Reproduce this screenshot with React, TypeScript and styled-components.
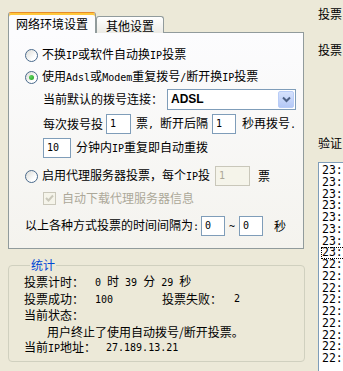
import React from 'react'
import styled, { createGlobalStyle } from 'styled-components'

const GlobalStyle = createGlobalStyle`
  html, body { margin: 0; padding: 0; }
  body {
    background: #ece9d8;
    font-family: "Noto Sans CJK SC", "Noto Sans", sans-serif;
    font-size: 12px;
    color: #000;
  }
`

const logLines = [
  '23:09:41', '23:08:17', '23:06:52', '23:05:30', '23:04:03', '23:02:39', '23:01:14', '23:00:02',
  '22:58:36', '22:57:11', '22:55:47', '22:54:20', '22:52:58', '22:51:33', '22:50:09', '22:48:44', '22:47:18'
]

// полуширинные символы как в SimSun
const A = styled.span`
  font-family: "DejaVu Sans Mono", "Liberation Mono", monospace;
  font-size: 10px;
`

const Screen = styled.div`
  width: 343px;
  height: 371px;
  overflow: hidden;
  display: flex;
  align-items: flex-start;
`

const LeftCol = styled.div`
  flex: none;
  width: 297px;
  margin-left: 8px;
  display: flex;
  flex-direction: column;
`

const TabStrip = styled.div`
  height: 21px;
  margin-top: 12px;
  margin-bottom: -1px;
  display: flex;
  align-items: flex-end;
  position: relative;
  z-index: 1;
`

const Tab = styled.div<{ $active?: boolean; $w: number }>`
  box-sizing: border-box;
  width: ${({ $w }) => $w}px;
  height: ${({ $active }) => ($active ? 21 : 17)}px;
  align-self: ${({ $active }) => ($active ? 'flex-end' : 'flex-start')};
  margin-top: ${({ $active }) => ($active ? 0 : 4)}px;
  border: 1px solid #919b9c;
  border-bottom: none;
  border-radius: 3px 3px 0 0;
  background: ${({ $active }) => ($active ? '#fcfcfe' : 'linear-gradient(#ffffff, #ecebe6)')};
  ${({ $active }) => ($active ? 'border-top: 1px solid #e68b2c; box-shadow: inset 0 2px 0 #ffc83c;' : '')}
  display: flex;
  justify-content: center;
  align-items: center;
  padding-top: ${({ $active }) => ($active ? 1 : 2)}px;
  line-height: 14px;
  font-size: 12px;
`

const Panel = styled.div`
  box-sizing: border-box;
  width: 296px;
  height: 217px;
  border: 1px solid #919b9c;
  background: linear-gradient(#fcfcfe, #f4f3ee);
  padding-left: 16px;
  display: flex;
  flex-direction: column;
`

const Row = styled.div<{ $mt: number; $indent?: number }>`
  height: 20px;
  margin-top: ${({ $mt }) => $mt}px;
  padding-left: ${({ $indent }) => $indent ?? 0}px;
  display: flex;
  align-items: center;
  white-space: nowrap;
  line-height: 14px;
`

const Label = styled.span<{ $ml?: number; $muted?: boolean }>`
  margin-left: ${({ $ml }) => $ml ?? 0}px;
  color: ${({ $muted }) => ($muted ? '#aca899' : '#000')};
`

const Radio = styled.span<{ $checked?: boolean }>`
  box-sizing: border-box;
  flex: none;
  width: 13px;
  height: 13px;
  margin-right: 4px;
  border-radius: 50%;
  border: 1px solid #4a6a8c;
  background: linear-gradient(135deg, #dcdcd7, #ffffff 70%);
  display: flex;
  align-items: center;
  justify-content: center;

  &::after {
    content: '';
    display: ${({ $checked }) => ($checked ? 'block' : 'none')};
    width: 5px;
    height: 5px;
    border-radius: 50%;
    background: radial-gradient(circle at 35% 35%, #5ed25e, #21a121);
  }
`

const Check = styled.span`
  box-sizing: border-box;
  flex: none;
  width: 13px;
  height: 13px;
  border: 1px solid #cac8bb;
  background: #f5f4ea;
  display: flex;
  align-items: center;
  justify-content: center;
`

const Field = styled.div<{ $w: number; $ml?: number; $disabled?: boolean }>`
  box-sizing: border-box;
  flex: none;
  width: ${({ $w }) => $w}px;
  height: 20px;
  margin-left: ${({ $ml }) => $ml ?? 0}px;
  border: 1px solid ${({ $disabled }) => ($disabled ? '#c9c7ba' : '#7f9db9')};
  background: ${({ $disabled }) => ($disabled ? '#f5f4ea' : '#fff')};
  color: ${({ $disabled }) => ($disabled ? '#aca899' : '#000')};
  padding-left: 3px;
  display: flex;
  align-items: center;
  font-family: "DejaVu Sans Mono", "Liberation Mono", monospace;
  font-size: 10px;
`

const Combo = styled.div`
  box-sizing: border-box;
  flex: none;
  width: 129px;
  height: 21px;
  margin-left: 4px;
  border: 1px solid #7f9db9;
  background: #fff;
  display: flex;
  align-items: center;
  padding: 1px;
`

const ComboText = styled.span`
  flex: 1;
  padding-left: 2px;
  font-family: "Liberation Sans", sans-serif;
  font-size: 12px;
  font-weight: bold;
`

const ComboButton = styled.span`
  box-sizing: border-box;
  width: 16px;
  height: 17px;
  border: 1px solid #b9cdf7;
  border-radius: 2px;
  background: linear-gradient(#d6e2fd, #b4c8f6);
  display: flex;
  align-items: center;
  justify-content: center;
`

const Group = styled.fieldset`
  box-sizing: border-box;
  width: 297px;
  height: 104px;
  margin: 9px 0 0 0;
  padding: 2px 0 0 15px;
  border: 1px solid #d0d0bf;
  border-radius: 4px;
  min-width: 0;
`

const Legend = styled.legend`
  margin-left: 6px;
  padding: 0 1px;
  line-height: 14px;
  color: #0046d5;
`

const StatRow = styled.div<{ $indent?: number }>`
  height: 16.5px;
  padding-left: ${({ $indent }) => $indent ?? 0}px;
  display: flex;
  align-items: center;
  white-space: nowrap;
  line-height: 14px;
`

const StatKey = styled.span<{ $w: number }>`
  flex: none;
  width: ${({ $w }) => $w}px;
`

const RightCol = styled.div`
  flex: none;
  width: 60px;
  margin-left: 13px;
  display: flex;
  flex-direction: column;
  line-height: 14px;
`

const SideLabel = styled.div<{ $mt: number }>`
  margin-top: ${({ $mt }) => $mt}px;
  white-space: nowrap;
`

const LogList = styled.div`
  box-sizing: border-box;
  margin-top: 12px;
  width: 80px;
  height: 230px;
  border: 1px solid #7f9db9;
  background: #fff;
  padding: 2px 0 0 2px;
`

const LogItem = styled.div<{ $focus?: boolean }>`
  height: 11.75px;
  line-height: 11.75px;
  padding-left: 1px;
  font-family: "DejaVu Sans Mono", "Liberation Mono", monospace;
  font-size: 11.5px;
  white-space: nowrap;
  outline: ${({ $focus }) => ($focus ? '1px dotted #000' : 'none')};
  outline-offset: -1px;
`

const Chevron = () => (
  <svg width='9' height='7' viewBox='0 0 9 7'>
    <path d='M1 1.5 L4.5 5 L8 1.5' fill='none' stroke='#4d6185' strokeWidth='2' />
  </svg>
)

const Tick = () => (
  <svg width='9' height='9' viewBox='0 0 9 9'>
    <path d='M1 4 L3.5 6.5 L8 1.5' fill='none' stroke='#cac8bb' strokeWidth='2' />
  </svg>
)

const App: React.FC = () => {
  return (
    <Screen>
      <GlobalStyle />
      <LeftCol>
        <TabStrip>
          <Tab $active $w={88}>网络环境设置</Tab>
          <Tab $w={68}>其他设置</Tab>
        </TabStrip>
        <Panel>
          <Row $mt={12}>
            <Radio />
            <Label>不换<A>IP</A>或软件自动换<A>IP</A>投票</Label>
          </Row>
          <Row $mt={2}>
            <Radio $checked />
            <Label>使用<A>Adsl</A>或<A>Modem</A>重复拨号<A>/</A>断开换<A>IP</A>投票</Label>
          </Row>
          <Row $mt={2} $indent={18}>
            <Label>当前默认的拨号连接：</Label>
            <Combo>
              <ComboText>ADSL</ComboText>
              <ComboButton><Chevron /></ComboButton>
            </Combo>
          </Row>
          <Row $mt={5} $indent={18}>
            <Label>每次拨号投</Label>
            <Field $w={25} $ml={3}>1</Field>
            <Label $ml={5}>票<A>, </A>断开后隔</Label>
            <Field $w={24} $ml={4}>1</Field>
            <Label $ml={6}>秒再拨号<A>.</A></Label>
          </Row>
          <Row $mt={4} $indent={18}>
            <Field $w={28}>10</Field>
            <Label $ml={5}>分钟内<A>IP</A>重复即自动重拨</Label>
          </Row>
          <Row $mt={8}>
            <Radio />
            <Label>启用代理服务器投票，每个<A>IP</A>投</Label>
            <Field $w={35} $ml={5} $disabled>1</Field>
            <Label $ml={8}>票</Label>
          </Row>
          <Row $mt={2} $indent={18}>
            <Check><Tick /></Check>
            <Label $ml={6} $muted>自动下载代理服务器信息</Label>
          </Row>
          <Row $mt={8}>
            <Label>以上各种方式投票的时间间隔为<A>:</A></Label>
            <Field $w={24} $ml={2}>0</Field>
            <Label $ml={4}><A>~</A></Label>
            <Field $w={24} $ml={4}>0</Field>
            <Label $ml={11}>秒</Label>
          </Row>
        </Panel>
        <Group>
          <Legend>统计</Legend>
          <StatRow>
            <StatKey $w={71}>投票计时：</StatKey>
            <span><A>0 </A>时<A> 39 </A>分<A> 29 </A>秒</span>
          </StatRow>
          <StatRow>
            <StatKey $w={71}>投票成功：</StatKey>
            <StatKey $w={67}><A>100</A></StatKey>
            <StatKey $w={72}>投票失败：</StatKey>
            <A>2</A>
          </StatRow>
          <StatRow>
            <StatKey $w={71}>当前状态：</StatKey>
          </StatRow>
          <StatRow $indent={23}>用户终止了使用自动拨号/断开投票。</StatRow>
          <StatRow>
            <StatKey $w={82}>当前<A>IP</A>地址：</StatKey>
            <A>27.189.13.21</A>
          </StatRow>
        </Group>
      </LeftCol>
      <RightCol>
        <SideLabel $mt={7}>投票</SideLabel>
        <SideLabel $mt={22}>投票</SideLabel>
        <SideLabel $mt={79}>验证</SideLabel>
        <LogList>
          {logLines.map((t, i) => (
            <LogItem key={t} $focus={i === 7}>{t}</LogItem>
          ))}
        </LogList>
      </RightCol>
    </Screen>
  )
}

export default App
